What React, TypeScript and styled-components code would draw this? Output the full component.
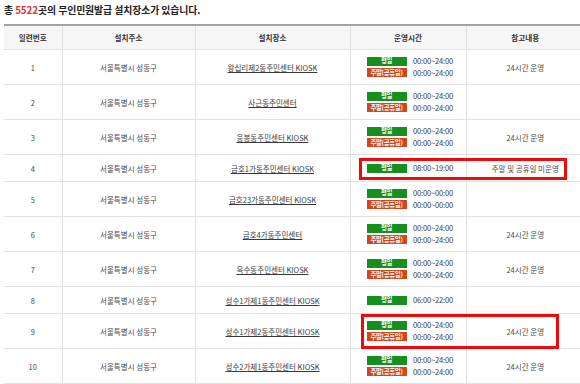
import styled, { createGlobalStyle } from "styled-components";

type Row = {
  no: number;
  place: string;
  weekday: string;
  weekend?: string;
  note?: string;
  mark?: "single" | "double";
};

const rows: Row[] = [
  { no: 1, place: "왕십리제2동주민센터 KIOSK", weekday: "00:00~24:00", weekend: "00:00~24:00", note: "24시간 운영" },
  { no: 2, place: "사근동주민센터", weekday: "00:00~24:00", weekend: "00:00~24:00" },
  { no: 3, place: "응봉동주민센터 KIOSK", weekday: "00:00~24:00", weekend: "00:00~24:00", note: "24시간 운영" },
  { no: 4, place: "금호1가동주민센터 KIOSK", weekday: "08:00~19:00", note: "주말 및 공휴일 미운영", mark: "single" },
  { no: 5, place: "금호23가동주민센터 KIOSK", weekday: "00:00~00:00", weekend: "00:00~00:00" },
  { no: 6, place: "금호4가동주민센터", weekday: "00:00~24:00", weekend: "00:00~24:00", note: "24시간 운영" },
  { no: 7, place: "옥수동주민센터 KIOSK", weekday: "00:00~24:00", weekend: "00:00~24:00", note: "24시간 운영" },
  { no: 8, place: "성수1가제1동주민센터 KIOSK", weekday: "06:00~22:00" },
  { no: 9, place: "성수1가제2동주민센터 KIOSK", weekday: "00:00~24:00", weekend: "00:00~24:00", note: "24시간 운영", mark: "double" },
  { no: 10, place: "성수2가제1동주민센터 KIOSK", weekday: "00:00~24:00", weekend: "00:00~24:00", note: "24시간 운영" },
];

export default function App() {
  return (
    <>
      <GlobalStyle />
      <Page>
        <Title>
          총 <Count>5522</Count>곳의 무인민원발급 설치장소가 있습니다.
        </Title>
        <Table>
          <colgroup>
            <col style={{ width: 58 }} />
            <col style={{ width: 133 }} />
            <col style={{ width: 155 }} />
            <col style={{ width: 116 }} />
            <col style={{ width: 118 }} />
          </colgroup>
          <thead>
            <tr>
              <Th>일련번호</Th>
              <Th>설치주소</Th>
              <Th>설치장소</Th>
              <Th>운영시간</Th>
              <Th $last>참고내용</Th>
            </tr>
          </thead>
          <tbody>
            {rows.map((row) => (
              <tr key={row.no}>
                <Td $double={!!row.weekend}>{row.no}</Td>
                <Td $double={!!row.weekend}>서울특별시 성동구</Td>
                <Td $double={!!row.weekend}>
                  <PlaceLink>{row.place}</PlaceLink>
                </Td>
                <TimeCell $double={!!row.weekend}>
                  <Hours>
                    <Badge $kind="weekday">평일</Badge>
                    <Time>{row.weekday}</Time>
                    {row.weekend && (
                      <>
                        <Badge $kind="weekend">주말(공휴일)</Badge>
                        <Time>{row.weekend}</Time>
                      </>
                    )}
                  </Hours>
                  {row.mark && <Highlight $mark={row.mark} />}
                </TimeCell>
                <Td $double={!!row.weekend} $last>
                  {row.note}
                </Td>
              </tr>
            ))}
          </tbody>
        </Table>
      </Page>
    </>
  );
}

const GlobalStyle = createGlobalStyle`
  html, body {
    margin: 0;
    padding: 0;
    background: #ffffff;
    overflow: hidden;
  }
  body {
    font-family: "Noto Sans CJK KR", "Noto Sans", sans-serif;
  }
`;

const Page = styled.div`
  width: 580px;
  height: 384px;
  padding: 3px 0 0 4px;
  box-sizing: border-box;
  overflow: hidden;
`;

const Title = styled.h2`
  margin: 0 0 7px;
  font-size: 9.9px;
  line-height: 14px;
  font-weight: 700;
  color: #222;
  letter-spacing: -0.1px;
`;

const Count = styled.span`
  color: #e5322d;
`;

const Table = styled.table`
  width: 580px;
  table-layout: fixed;
  border-collapse: collapse;
  border-top: 2px solid #a3a3a3;
`;

const Th = styled.th<{ $last?: boolean }>`
  height: 23px;
  padding: 0;
  background: #f6f6f6;
  border-bottom: 1px solid #e2e2e2;
  border-right: ${(p) => (p.$last ? "none" : "1px solid #e2e2e2")};
  font-size: 7.6px;
  font-weight: 700;
  color: #333;
  text-align: center;
`;

const Td = styled.td<{ $double?: boolean; $last?: boolean }>`
  height: ${(p) => (p.$double ? "34px" : "26px")};
  padding: 0;
  border-bottom: 1px solid #e2e2e2;
  border-right: ${(p) => (p.$last ? "none" : "1px solid #e2e2e2")};
  font-size: 7.5px;
  color: #4a4a4a;
  text-align: center;
  vertical-align: middle;
`;

const TimeCell = styled(Td)`
  position: relative;
  text-align: left;
`;

const PlaceLink = styled.a`
  color: #3a3a3a;
  text-decoration: underline;
  text-underline-offset: 1px;
`;

const Hours = styled.div`
  display: grid;
  grid-template-columns: 40px auto;
  column-gap: 6.5px;
  row-gap: 1.5px;
  align-items: center;
  padding-left: 16px;
`;

const Badge = styled.span<{ $kind: "weekday" | "weekend" }>`
  display: flex;
  align-items: center;
  justify-content: center;
  height: 9px;
  background: ${(p) => (p.$kind === "weekday" ? "#15901f" : "#d2461b")};
  color: #fff;
  font-size: 6.4px;
  font-weight: 700;
  letter-spacing: -0.3px;
  line-height: 1;
`;

const Time = styled.span`
  font-size: 7.6px;
  color: #3f3f3f;
  letter-spacing: -0.2px;
  line-height: 10px;
`;

const Highlight = styled.span<{ $mark: "single" | "double" }>`
  position: absolute;
  left: ${(p) => (p.$mark === "single" ? "8px" : "10px")};
  top: ${(p) => (p.$mark === "single" ? "3px" : "0px")};
  width: ${(p) => (p.$mark === "single" ? "208px" : "198px")};
  height: ${(p) => (p.$mark === "single" ? "22px" : "35px")};
  box-sizing: border-box;
  border: 3px solid #ee0a0a;
  pointer-events: none;
  z-index: 2;
`;
